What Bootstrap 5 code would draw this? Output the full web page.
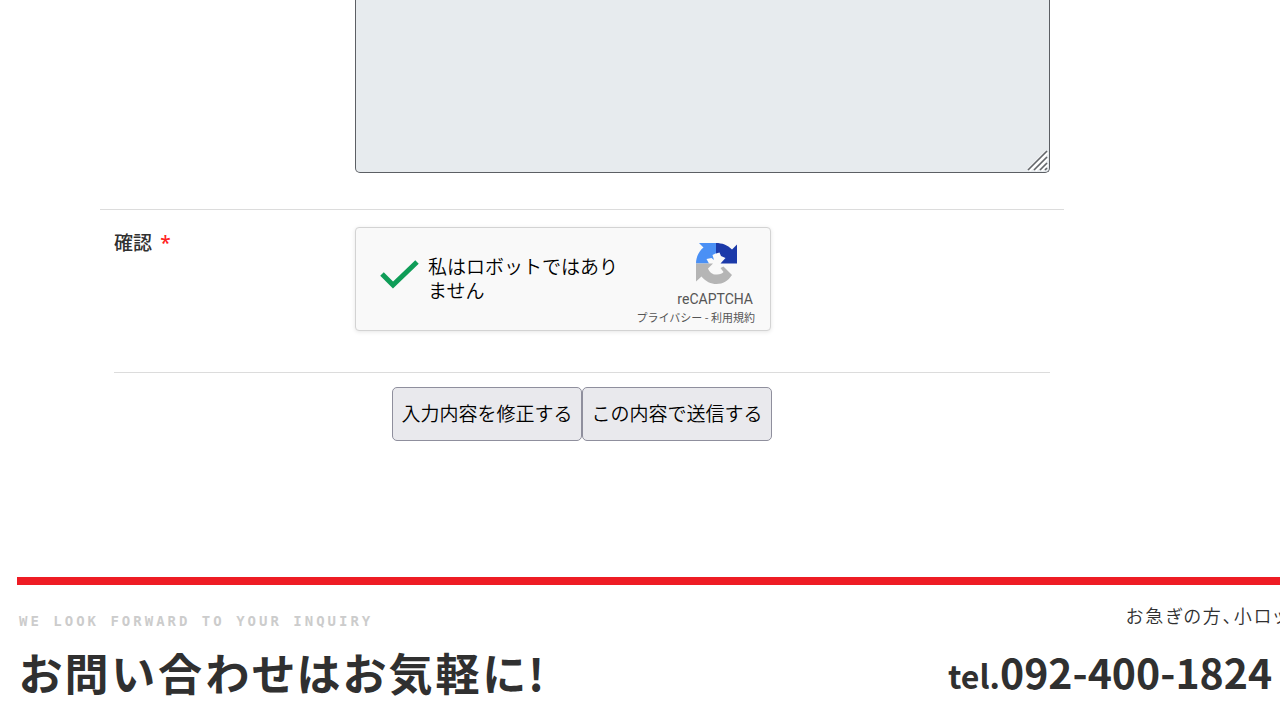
<!DOCTYPE html>
<html lang="ja">
<head>
<meta charset="utf-8">
<meta name="viewport" content="width=device-width, initial-scale=1">
<title>お問い合わせ</title>
<link href="https://cdn.jsdelivr.net/npm/bootstrap@5.3.0/dist/css/bootstrap.min.css" rel="stylesheet">
<style>
body { font-family: "Noto Sans CJK JP", sans-serif; color: #303030; background: #fff; }
.inquiry-form { margin-left: 100px; margin-right: 216px; font-size: 19px; }
.field-row { padding: 0 14px; }
.field-label { flex: 0 0 241px; line-height: 30px; }
.required-star { color: #f22; font-family: "Noto Sans", sans-serif; }
.message-box { height: 173px; background: #e7ebee; border: 1px solid #5c5f64; border-top: 0; border-radius: 0 0 5px 5px; resize: none; }
.message-box:focus { background: #e7ebee; box-shadow: none; }
.grip { right: 1px; bottom: 1px; }
.rule-top { border-top: 1px solid #dcdcdc; }
.confirm-row { margin-top: 36px; padding-top: 17px; }
.captcha { width: 416px; height: 104px; background: #f9f9f9; border: 1px solid #d3d3d3; border-radius: 4px; box-shadow: 0 1px 4px rgba(0,0,0,.1); padding-left: 24px; padding-right: 15px; }
.captcha-main { padding-bottom: 8px; }
.captcha-check { appearance: none; width: 40px; height: 32px; margin: 0; background: none; border: 0; }
.captcha-text { width: 200px; color: #000; line-height: 24px; font-weight: 350; padding-top: 6px; }
.captcha-brand { width: 124px; color: #555; padding-top: 14px; }
.captcha-logo { margin-right: 17px; }
.captcha-name { font: 14px/20px Roboto, sans-serif; padding-right: 2px; }
.captcha-links { font-size: 11px; line-height: 16px; }
.actions { margin-top: 41px; padding-top: 14px; }
.form-button { height: 54px; min-width: 190px; font-size: 19px; font-weight: 350; padding: 0 8px 2px; color: #000; background: #e9e9ed; border: 1px solid #8f8f9d; border-radius: 5px; }
.contact { margin: 136px 0 0 17px; border-top: 8px solid #ee1c24; }
.contact-main { padding: 26px 0 0 2px; }
.eyebrow { font: bold 14px/20px "DejaVu Sans Mono", monospace; letter-spacing: 3px; color: #ccc; }
.contact-title { font-size: 44px; line-height: 60px; font-feature-settings: "palt"; letter-spacing: 3px; margin-top: 11px; }
.contact-side { width: 332px; padding-top: 18px; }
.hurry { font-size: 18px; font-weight: 350; line-height: 24px; letter-spacing: 2px; font-feature-settings: "palt"; padding-left: 178px; }
.phone { font-size: 41px; line-height: 60px; color: #303030; margin-top: 14px; }
.phone-prefix { font-size: 32px; }
</style>
</head>
<body>
<main>
<form class="inquiry-form">
  <div class="field-row d-flex">
    <div class="field-label"></div>
    <div class="flex-grow-1 position-relative">
      <textarea class="form-control message-box d-block" aria-label="お問い合わせ内容" readonly></textarea>
      <svg class="grip position-absolute" width="22" height="22" viewBox="0 0 22 22" fill="none" stroke="#fff" stroke-width="4" aria-hidden="true"><path d="M2 20 20 2M8 20 20 8M14 20 20 14"/><path stroke="#63666a" stroke-width="1.7" d="M1 20 20 1M7 20 20 7M13 20 20 13M18 20l2-2"/></svg>
    </div>
  </div>
  <div class="field-row rule-top confirm-row d-flex">
    <label class="field-label fw-medium" for="robot">確認 <span class="required-star ms-1">*</span></label>
    <div class="captcha d-flex justify-content-between">
      <div class="captcha-main d-flex align-items-center">
        <span class="position-relative d-flex me-2">
          <input type="checkbox" class="captcha-check" id="robot" checked>
          <svg class="position-absolute top-0 start-0 pe-none" width="40" height="32" viewBox="0 0 40 32" aria-hidden="true"><path d="M2 15 13 26 37 3" fill="none" stroke="#0f9d58" stroke-width="5"/></svg>
        </span>
        <label for="robot" class="captcha-text">私はロボットではありません</label>
      </div>
      <div class="captcha-brand d-flex flex-column align-items-end">
        <svg class="captcha-logo" width="43" height="43" viewBox="0 0 43 43" aria-hidden="true">
          <path fill="#4a90f5" d="M21.500 1H4l4.500 4.500C3.500 9.500 1 15.500 1 21.500h13l-2.500-4.500 5-1 2.500 2-1.500-5 4-2z"/>
          <path fill="#1c3aa9" d="M21 1c6 0 11.500 2 16 6.500L42 2.500v19H25.500l5-5.500-4.500-2-1.500-3.500-3.500 1z"/>
          <path fill="#b5b5b5" d="M1 21.500h17l-5 5c1.500 4 5 6.500 9 6 3 0 5.500-1 6.500-2.500l-3-4 3-1.500 8.500 8.500C33 39 28 42 21.500 42c-5.500 0-11-2.500-15-7.500L1 39.500z"/>
        </svg>
        <span class="captcha-name mt-1">reCAPTCHA</span>
        <span class="captcha-links text-nowrap"><a href="#" class="text-reset text-decoration-none">プライバシー</a> - <a href="#" class="text-reset text-decoration-none">利用規約</a></span>
      </div>
    </div>
  </div>
  <div class="field-row">
    <div class="rule-top actions d-flex justify-content-center">
      <button type="button" class="form-button">入力内容を修正する</button>
      <button type="button" class="form-button">この内容で送信する</button>
    </div>
  </div>
</form>
</main>
<footer class="contact d-flex justify-content-between overflow-hidden">
  <div class="contact-main">
    <div class="eyebrow">WE LOOK FORWARD TO YOUR INQUIRY</div>
    <h2 class="contact-title fw-bold text-nowrap mb-0">お問い合わせはお気軽に!</h2>
  </div>
  <div class="contact-side">
    <div class="hurry text-nowrap overflow-hidden">お急ぎの方、小ロッ</div>
    <a href="tel:0924001824" class="phone fw-bold d-block text-decoration-none text-nowrap"><span class="phone-prefix">tel.</span>092-400-1824</a>
  </div>
</footer>
<script src="https://cdn.jsdelivr.net/npm/bootstrap@5.3.0/dist/js/bootstrap.bundle.min.js"></script>
</body>
</html>
